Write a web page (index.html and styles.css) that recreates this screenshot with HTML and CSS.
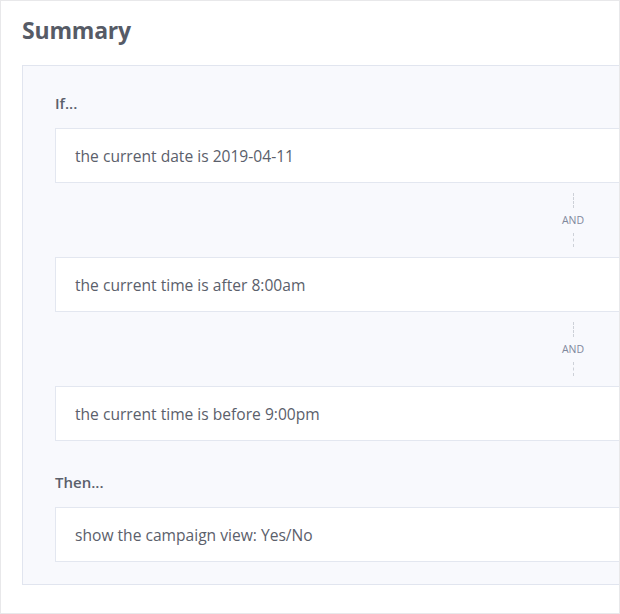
FILE: index.html
```html
<!DOCTYPE html>
<html>
<head>
<meta charset="utf-8">
<link rel="stylesheet" href="styles.css">
</head>
<body>
<div class="frame">
  <h1 class="title">Summary</h1>
  <div class="panel">
    <div class="label">If...</div>
    <div class="card">the current date is 2019-04-11</div>
    <div class="connector"><div class="conn-col"><span class="dots"></span><span class="and">AND</span><span class="dots"></span></div></div>
    <div class="card">the current time is after 8:00am</div>
    <div class="connector"><div class="conn-col"><span class="dots"></span><span class="and">AND</span><span class="dots"></span></div></div>
    <div class="card">the current time is before 9:00pm</div>
    <div class="label label-then">Then...</div>
    <div class="card">show the campaign view: Yes/No</div>
  </div>
</div>
</body>
</html>
```

FILE: styles.css
```css
* { box-sizing: border-box; }
html, body { margin: 0; padding: 0; background: #fff; }
body { font-family: "Open Sans", "Liberation Sans", sans-serif; color: #5b606b; }
.frame {
  width: 620px;
  height: 614px;
  border: 1px solid #e8e8ea;
  overflow: hidden;
  padding: 14px 0 0 21px;
  background: #fff;
}
.title {
  margin: 0;
  font-size: 23px;
  line-height: 30px;
  font-weight: 700;
  color: #565b66;
  letter-spacing: -0.2px;
}
.panel {
  margin-top: 20px;
  width: 720px;
  background: #f8f9fd;
  border: 1px solid #e1e5ef;
  padding: 27px 0 22px 32px;
}
.label {
  font-size: 15px;
  line-height: 20px;
  font-weight: 600;
  color: #5b606b;
  margin-bottom: 15px;
}
.label-then { margin-top: 31px; }
.card {
  height: 55px;
  background: #fff;
  border: 1px solid #e3e7f0;
  padding: 0 19px;
  display: flex;
  align-items: center;
  font-size: 15.6px;
  color: #5b606b;
}
.connector {
  height: 74px;
  padding-left: 498px;
  display: flex;
}
.conn-col {
  width: 40px;
  display: flex;
  flex-direction: column;
  align-items: center;
  padding: 10px 0 10px;
}
.dots {
  width: 0;
  height: 15px;
  border-left: 1px dashed #cdd1d8;
}
.and {
  font-size: 10.5px;
  line-height: 25px;
  font-weight: 400;
  color: #7f889c;
}
```
